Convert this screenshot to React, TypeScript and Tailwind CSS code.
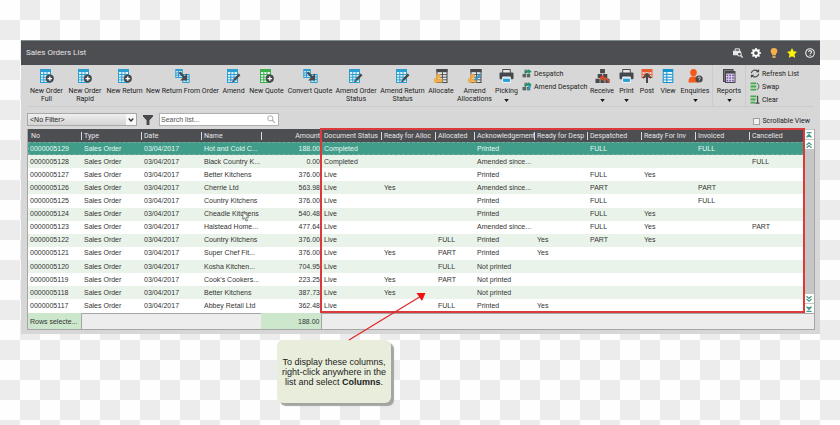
import { ReactNode } from "react";

type Order = {
  no: string;
  name: string;
  amount: string;
  status: string;
  readyAlloc?: string;
  allocated?: string;
  ack: string;
  readyDesp?: string;
  despatched?: string;
  readyInv?: string;
  invoiced?: string;
  cancelled?: string;
};

const orders: Order[] = [
  { no: "0000005129", name: "Hot and Cold C...", amount: "188.00", status: "Completed", ack: "Printed", despatched: "FULL", invoiced: "FULL" },
  { no: "0000005128", name: "Black Country K...", amount: "0.00", status: "Completed", ack: "Amended since...", cancelled: "FULL" },
  { no: "0000005127", name: "Better Kitchens", amount: "376.00", status: "Live", ack: "Printed", despatched: "FULL", readyInv: "Yes" },
  { no: "0000005126", name: "Cherrie Ltd", amount: "563.98", status: "Live", readyAlloc: "Yes", ack: "Amended since...", despatched: "PART", invoiced: "PART" },
  { no: "0000005125", name: "Country Kitchens", amount: "376.00", status: "Live", ack: "Printed", despatched: "FULL", invoiced: "FULL" },
  { no: "0000005124", name: "Cheadle Kitchens", amount: "540.48", status: "Live", ack: "Printed", despatched: "FULL", readyInv: "Yes" },
  { no: "0000005123", name: "Halstead Home...", amount: "477.64", status: "Live", ack: "Amended since...", despatched: "FULL", readyInv: "Yes", cancelled: "PART" },
  { no: "0000005122", name: "Country Kitchens", amount: "376.00", status: "Live", allocated: "FULL", ack: "Printed", readyDesp: "Yes", despatched: "PART", readyInv: "Yes" },
  { no: "0000005121", name: "Super Chef Fit...", amount: "376.00", status: "Live", readyAlloc: "Yes", allocated: "PART", ack: "Printed", readyDesp: "Yes" },
  { no: "0000005120", name: "Kosha Kitchen...", amount: "704.95", status: "Live", allocated: "FULL", ack: "Not printed" },
  { no: "0000005119", name: "Cook's Cookers...", amount: "223.25", status: "Live", readyAlloc: "Yes", allocated: "PART", ack: "Not printed" },
  { no: "0000005118", name: "Better Kitchens", amount: "387.73", status: "Live", readyAlloc: "Yes", ack: "Not printed" },
  { no: "0000005117", name: "Abbey Retail Ltd", amount: "362.48", status: "Live", allocated: "FULL", ack: "Printed", readyDesp: "Yes" },
];

const columns = [
  { title: "No", width: "w-[53px]" },
  { title: "Type", width: "w-[60px]" },
  { title: "Date", width: "w-[60px]" },
  { title: "Name", width: "w-[60px]" },
  { title: "Amount", width: "w-[60px]" },
  { title: "Document Status", width: "w-[60px]" },
  { title: "Ready for Alloc", width: "w-[54px]" },
  { title: "Allocated", width: "w-[39px]" },
  { title: "Acknowledgement", width: "w-[60px]" },
  { title: "Ready for Desp", width: "w-[53px]" },
  { title: "Despatched", width: "w-[54px]" },
  { title: "Ready For Inv", width: "w-[54px]" },
  { title: "Invoiced", width: "w-[54px]" },
  { title: "Cancelled", width: "w-[55px]" },
];

const BLUE = "#2a9fd0";
const GREEN = "#3fae49";
const DARK = "#47484c";

/* icons */
function Sheet({ color }: { color: string }) {
  return (
    <>
      <rect x="0.5" y="0.5" width="10" height="13" fill="#e4f2f8" stroke={color} />
      <rect x="0.5" y="0.5" width="10" height="2.5" fill={color} />
      <path d="M1 5.5h9M1 8.2h9M1 10.9h9M3.8 3v10M7 3v10" stroke={color} strokeWidth="1" />
    </>
  );
}

function Icon({ children, className = "w-[14px] h-[14px]" }: { children: ReactNode; className?: string }) {
  return (
    <svg viewBox="0 0 14 14" className={`shrink-0 ${className}`} fill="none" aria-hidden="true">
      {children}
    </svg>
  );
}

function NewIcon({ color = BLUE }: { color?: string }) {
  return (
    <Icon>
      <Sheet color={color} />
      <circle cx="9.8" cy="9.6" r="4" fill={DARK} />
      <path d="M9.8 7.4v4.4M7.6 9.6h4.4" stroke="#fff" strokeWidth="1.3" />
    </Icon>
  );
}

function ConvertIcon() {
  return (
    <Icon className="w-[15px] h-[14px]">
      <rect x="0.3" y="0.5" width="6.5" height="8" fill="#d6ebf5" stroke={BLUE} />
      <path d="M0.3 1.5h6.5M0.3 4h6.5M0.3 6.2h6.5M3 1v7" stroke={BLUE} />
      <rect x="7.3" y="5.5" width="6.3" height="8" fill="#d6ebf5" stroke={BLUE} />
      <path d="M7.3 8h6.5M7.3 10.6h6.5M10.6 6v7" stroke={BLUE} />
      <path d="M4 3.2l5.5 5.8" stroke={DARK} strokeWidth="2.2" />
      <path d="M11.6 4.600v7h-7z" fill={DARK} />
    </Icon>
  );
}

function AmendIcon() {
  return (
    <Icon>
      <Sheet color={BLUE} />
      <path d="M12.6 5.4L7.2 11" stroke={DARK} strokeWidth="2.4" />
      <path d="M5.2 13.2l.7-2.8 2 2z" fill={DARK} />
    </Icon>
  );
}

function AllocateIcon({ pencil }: { pencil?: boolean }) {
  return (
    <Icon>
      <rect x="3" y="0.5" width="10" height="13" fill="#e8e8e8" stroke={DARK} />
      <rect x="2.5" y="0" width="11" height="3.2" fill={DARK} />
      <path d="M3 5.6h10M3 8.2h10M3 10.8h10M8.5 3v10" stroke={DARK} strokeWidth="0.9" />
      <rect x="2.5" y="5.2" width="3.8" height="3.8" fill="#f3ad45" />
      <rect x="0" y="9.4" width="4" height="4.2" fill="#f3ad45" />
      <rect x="4.5" y="9.4" width="4" height="4.2" fill="#f3ad45" />
      {pencil && <path d="M12.6 5L7 11.4" stroke={BLUE} strokeWidth="2" />}
    </Icon>
  );
}

function PrinterIcon() {
  return (
    <Icon className="w-[15px] h-[14px]">
      <path d="M3.2 0.5h7.6v4H3.2z" fill="#e6e6e6" stroke={DARK} />
      <rect x="0" y="3.6" width="14" height="6.6" rx="1" fill={DARK} />
      <path d="M3.2 8h7.6v5.5H3.2z" fill="#bfe3f3" stroke="#e8f4fa" />
      <path d="M3.600 11.400h6.800" stroke={BLUE} strokeWidth="3" />
    </Icon>
  );
}

function DespatchIcon({ amend }: { amend?: boolean }) {
  return (
    <Icon className="w-[10px] h-[9px]">
      <rect x="3" y="1" width="5" height="5" fill="#69806f" />
      <rect x="0" y="7.6" width="5.4" height="5.4" fill="#5c6660" />
      <rect x="6.6" y="7.6" width="5.4" height="5.4" fill="#5c6660" />
      <path d="M4 7c1-3 3-3.5 6-3.5" stroke="#16906a" strokeWidth="2.4" />
      <path d="M9 0l5 4-5 4z" fill="#16906a" />
      {amend && <path d="M13 5.5L8 12" stroke={BLUE} strokeWidth="2.4" />}
    </Icon>
  );
}

function ReceiveIcon() {
  return (
    <Icon className="w-[15px] h-[14px]">
      <path d="M4.6 0h4.8v4.2H4.6zM2.2 5h4.4v4H2.2zM7.4 5h4.4v4H7.4zM0 9.8h4.2V14H0zM4.9 9.8h4.2V14H4.9zM9.8 9.8H14V14H9.8z" fill={DARK} />
      <path d="M13 13.6c0-3.4-1.6-4.6-6-4.6" stroke="#d8482c" strokeWidth="1.9" />
      <path d="M8.2 5.6v6.8L3.6 9z" fill="#d8482c" />
    </Icon>
  );
}

function PostIcon() {
  return (
    <Icon>
      <rect x="2" y="0.5" width="10" height="8" fill="#f4d9cf" stroke="#ea5b32" />
      <path d="M2 1.5h10" stroke="#ea5b32" strokeWidth="3" />
      <path d="M2 5.5h10M5 3v5M9 3v5" stroke="#ea5b32" />
      <path d="M7 6v8" stroke={DARK} strokeWidth="2" />
      <path d="M3 9.2L7 4.8l4 4.4" stroke={DARK} strokeWidth="1.8" />
    </Icon>
  );
}

function ViewIcon() {
  return (
    <Icon>
      <rect x="2.2" y="0.5" width="9.6" height="13" fill="#eaf6fb" stroke="#1593cf" />
      <path d="M2 1.5h10" stroke="#1593cf" strokeWidth="3" />
      <path d="M2 5.4h10M2 8.2h10M2 10.9h10M5.8 3v10" stroke="#1593cf" />
    </Icon>
  );
}

function EnquiriesIcon() {
  return (
    <Icon className="w-[15px] h-[14px]">
      <ellipse cx="5" cy="3.6" rx="3.3" ry="3.6" fill="#f4591b" />
      <path d="M0 13.6c0-4.6 1.6-6 5-6s5 1.4 5 6z" fill="#f4591b" />
      <circle cx="10.6" cy="10" r="3.6" fill={DARK} />
      <path d="M9.5 9.2c0-1.6 2.3-1.5 2.3 0 0 .9-1.1.9-1.1 1.8M10.7 11.7v.7" stroke="#ddd" strokeWidth="0.9" />
    </Icon>
  );
}

function ReportsIcon() {
  return (
    <Icon>
      <rect x="1.5" y="0.5" width="9.5" height="12" fill="#77777c" stroke={DARK} />
      <rect x="3.5" y="2.5" width="9.5" height="11" fill="#e3dcee" stroke={DARK} />
      <path d="M3.5 3.6h9.5" stroke={DARK} strokeWidth="2" />
      <path d="M4.5 6.4h7.6M4.5 9h7.6M4.5 11.6h7.6" stroke="#7b57ab" strokeWidth="1.6" strokeDasharray="1.8 1" />
    </Icon>
  );
}

function RefreshIcon() {
  return (
    <Icon className="w-[10px] h-[9px]">
      <path d="M1.2 6.4A6 5.6 0 0 1 11.4 3.4M12.8 7.6A6 5.6 0 0 1 2.6 10.6" stroke={DARK} strokeWidth="1.7" />
      <path d="M13.4 0v5.2H8.2zM.6 14V8.8h5.2z" fill={DARK} />
    </Icon>
  );
}

function SwapIcon() {
  return (
    <Icon className="w-[10px] h-[9px]">
      <path d="M0 2h9M0 7h9M0 12h9" stroke={GREEN} strokeWidth="2.8" />
      <path d="M10 2c4 1.5 4 8.500 0 10" stroke={DARK} strokeWidth="1.4" />
    </Icon>
  );
}

function ClearIcon() {
  return (
    <Icon className="w-[10px] h-[9px]">
      <path d="M0 2h9M0 7h8M0 12h7" stroke={GREEN} strokeWidth="2.8" />
      <path d="M11 1v11M7.500 12.800h6.500" stroke={DARK} strokeWidth="2" />
    </Icon>
  );
}

function HeaderIcons() {
  return (
    <div className="flex items-center gap-2">
      <button aria-label="Print preview">
        <Icon className="w-[10px] h-[10px]">
          <path d="M3 4V1.200h6V4" stroke="#e8e8e8" strokeWidth="1.4" />
          <path d="M0 4h11v3H7.500L6 10H0z" fill="#e8e8e8" />
          <circle cx="9" cy="8.600" r="2.600" stroke="#e8e8e8" strokeWidth="1.500" />
          <path d="M11 10.600l2.600 2.800" stroke="#e8e8e8" strokeWidth="1.800" />
        </Icon>
      </button>
      <button aria-label="Settings">
        <Icon className="w-[10px] h-[10px]">
          <circle cx="7" cy="7" r="3.900" stroke="#fff" strokeWidth="2.600" />
          <path d="M7 0v3M7 11v3M0 7h3M11 7h3M2.100 2.100l2 2M9.900 9.900l2 2M2.100 11.900l2-2M9.900 4.100l2-2" stroke="#fff" strokeWidth="2.300" />
        </Icon>
      </button>
      <button aria-label="Tips">
        <Icon className="w-[10px] h-[10px]">
          <path d="M7 0a4.700 4.700 0 0 1 4.700 4.700C11.700 7 9.500 8 9.500 10h-5c0-2-2.200-3-2.200-5.300A4.700 4.700 0 0 1 7 0z" fill="#f9b04c" />
          <path d="M4.800 11h4.400v3H4.800z" fill="#d0a56c" />
        </Icon>
      </button>
      <button aria-label="Favourites">
        <Icon className="w-[10px] h-[10px]">
          <path d="M7 0l2.200 4.600 4.800.6-3.500 3.500.9 5.100L7 11.400l-4.400 2.400.9-5.100L0 5.200l4.800-.6z" fill="#fbf40a" />
        </Icon>
      </button>
      <button aria-label="Help">
        <Icon className="w-[10px] h-[10px]">
          <circle cx="7" cy="7" r="6" stroke="#f0f0f0" strokeWidth="1.500" />
          <path d="M5 5.600c0-2.700 4.200-2.500 4.200 0 0 1.500-2.100 1.500-2.100 3M7.100 9.700v1.500" stroke="#f0f0f0" strokeWidth="1.500" />
        </Icon>
      </button>
    </div>
  );
}

type ToolProps = { icon: ReactNode; lines: string[]; width: string; menu?: boolean };

function Tool({ icon, lines, width, menu }: ToolProps) {
  return (
    <button className={`flex shrink-0 flex-col items-center whitespace-nowrap ${width}`}>
      {icon}
      <span className="mt-[4px] flex flex-col items-center">
        {lines.map((line) => (
          <span key={line}>{line}</span>
        ))}
      </span>
      {menu && (
        <svg viewBox="0 0 6 4" className="mt-1 h-[3px] w-[5px]" aria-hidden="true">
          <path d="M0 0h6L3 4z" fill="#111" />
        </svg>
      )}
    </button>
  );
}

function SmallTool({ icon, label }: { icon: ReactNode; label: string }) {
  return (
    <button className="flex items-center gap-[2px] whitespace-nowrap">
      {icon}
      {label}
    </button>
  );
}

function Toolbar() {
  return (
    <div className="mx-[6px] flex h-[42px] border-b border-[#cbcbcb] font-[Roboto,sans-serif] text-[7px] leading-[8px]">
      <div className="flex items-start pt-1">
        <Tool icon={<NewIcon />} lines={["New Order", "Full"]} width="w-[39px]" />
        <Tool icon={<NewIcon />} lines={["New Order", "Rapid"]} width="w-[38px]" />
        <Tool icon={<NewIcon />} lines={["New Return"]} width="w-[41px]" />
        <Tool icon={<ConvertIcon />} lines={["New Return From Order"]} width="w-[75px]" />
        <Tool icon={<AmendIcon />} lines={["Amend"]} width="w-[27px]" />
        <Tool icon={<NewIcon color={GREEN} />} lines={["New Quote"]} width="w-[39px]" />
        <Tool icon={<ConvertIcon />} lines={["Convert Quote"]} width="w-[48px]" />
        <Tool icon={<AmendIcon />} lines={["Amend Order", "Status"]} width="w-[44px]" />
        <Tool icon={<AmendIcon />} lines={["Amend Return", "Status"]} width="w-[49px]" />
        <Tool icon={<AllocateIcon />} lines={["Allocate"]} width="w-[28px]" />
        <Tool icon={<AllocateIcon pencil />} lines={["Amend", "Allocations"]} width="w-[39px]" />
        <Tool icon={<PrinterIcon />} lines={["Picking"]} width="w-[25px]" menu />
        <div className="flex w-[68px] flex-col gap-1 pl-[3px]">
          <SmallTool icon={<DespatchIcon />} label="Despatch" />
          <SmallTool icon={<DespatchIcon amend />} label="Amend Despatch" />
        </div>
        <Tool icon={<ReceiveIcon />} lines={["Receive"]} width="w-[30px]" menu />
        <Tool icon={<PrinterIcon />} lines={["Print"]} width="w-[19px]" menu />
        <Tool icon={<PostIcon />} lines={["Post"]} width="w-[22px]" />
        <Tool icon={<ViewIcon />} lines={["View"]} width="w-[20px]" />
        <Tool icon={<EnquiriesIcon />} lines={["Enquiries"]} width="w-[34px]" menu />
      </div>
      <div className="border-x border-[#cbcbcb] pt-1">
        <Tool icon={<ReportsIcon />} lines={["Reports"]} width="w-[32px]" menu />
      </div>
      <div className="flex flex-col items-start gap-1 pl-1 pt-1">
        <SmallTool icon={<RefreshIcon />} label="Refresh List" />
        <SmallTool icon={<SwapIcon />} label="Swap" />
        <SmallTool icon={<ClearIcon />} label="Clear" />
      </div>
    </div>
  );
}

function FilterBar() {
  return (
    <div className="mx-[6px] mt-[6px] flex h-[13px] items-center text-[7px]">
      <div className="relative">
        <select
          aria-label="Filter"
          className="block h-[13px] w-[110px] appearance-none border border-[#a8a8a8] bg-linear-to-b from-[#efefef] to-[#d4d4d4] pl-[2px] text-[7px] leading-[11px] text-[#222]"
        >
          <option>&lt;No Filter&gt;</option>
        </select>
        <span className="pointer-events-none absolute top-px right-px bottom-px flex w-[10px] items-center justify-center bg-[#f8f8f8]">
          <svg viewBox="0 0 8 5" className="h-[4px] w-[6px]" fill="none" aria-hidden="true">
            <path d="M1 .5l3 3.200 3-3.200" stroke="#333" strokeWidth="1.800" />
          </svg>
        </span>
      </div>
      <button aria-label="Apply filter" className="ml-[6px]">
        <Icon className="w-[10px] h-[10px]">
          <path d="M0 0h14v2L9 7.500V14H5V7.500L0 2z" fill={DARK} />
        </Icon>
      </button>
      <div className="relative ml-[6px]">
        <input
          type="text"
          aria-label="Search list"
          placeholder="Search list..."
          className="block h-[13px] w-[120px] border border-[#b0b0b0] bg-white pl-px text-[7px] placeholder:text-[#555]"
        />
        <svg viewBox="0 0 14 14" className="absolute top-[2px] right-[4px] h-[8px] w-[8px]" fill="none" aria-hidden="true">
          <circle cx="5.800" cy="5.800" r="4.600" stroke="#a5a5a5" strokeWidth="1.600" />
          <path d="M9 9l4.500 4.500" stroke="#a5a5a5" strokeWidth="2" />
        </svg>
      </div>
      <label className="ml-auto flex items-center gap-[2px] pt-[4px] pr-[4px] font-[Roboto,sans-serif]">
        <input type="checkbox" className="h-[7px] w-[7px] appearance-none border border-[#a0a0a0] bg-[#f2f2f2]" />
        Scrollable View
      </label>
    </div>
  );
}

function ScrollButton({ label, path }: { label: string; path: string }) {
  return (
    <button aria-label={label} className="flex h-[9px] w-[9px] items-center justify-center bg-white">
      <svg viewBox="0 0 6 6" className="h-[6px] w-[6px]" fill="none" aria-hidden="true">
        <path d={path} stroke="#3f9d89" strokeWidth="1.200" />
      </svg>
    </button>
  );
}

function OrdersTable() {
  return (
    <div className="relative mr-[5px] ml-[6px] mt-[3px] flex border border-t-0 border-[#a6a6a6]">
      <table className="h-[200px] w-full table-fixed border-collapse text-left text-[7px] leading-[12px] whitespace-nowrap text-[#333]">
        <colgroup>
          {columns.map((col) => (
            <col key={col.title} className={col.width} />
          ))}
        </colgroup>
        <thead className="bg-[#4d4e52] font-[Roboto,sans-serif] text-[#e6e6e6]">
          <tr className="h-[13px]">
            {columns.map((col, i) => (
              <th key={col.title} className="p-0 font-normal">
                <div
                  className={`h-[8px] leading-[8px] ${i === 0 || i === 5 ? "pl-[3px]" : "border-l border-[#d8d8d8] pl-[2px]"} ${
                    col.title === "Amount" ? "pr-px text-right" : ""
                  }`}
                >
                  {col.title}
                </div>
              </th>
            ))}
          </tr>
        </thead>
        <tbody>
          {orders.map((o, i) => (
            <tr
              key={o.no}
              className={
                i === 0
                  ? "bg-[#3f9d89] text-[#e9f7f2] outline-1 -outline-offset-1 outline-dashed outline-[#78a99c]"
                  : i % 2 === 1
                    ? "bg-[#eaf3ea]"
                    : "bg-white"
              }
            >
              <td className="p-0 pl-[2px]">{o.no}</td>
              <td className="p-0 pl-[3px]">Sales Order</td>
              <td className="p-0 pl-[3px]">03/04/2017</td>
              <td className="p-0 pl-[3px]">{o.name}</td>
              <td className="p-0 pr-px text-right">{o.amount}</td>
              <td className="p-0 pl-[3px]">{o.status}</td>
              <td className="p-0 pl-[3px]">{o.readyAlloc}</td>
              <td className="p-0 pl-[3px]">{o.allocated}</td>
              <td className="p-0 pl-[3px]">{o.ack}</td>
              <td className="p-0 pl-[3px]">{o.readyDesp}</td>
              <td className="p-0 pl-[3px]">{o.despatched}</td>
              <td className="p-0 pl-[3px]">{o.readyInv}</td>
              <td className="p-0 pl-[3px]">{o.invoiced}</td>
              <td className="p-0 pl-[3px]">{o.cancelled}</td>
            </tr>
          ))}
        </tbody>
        <tfoot>
          <tr className="h-[16px] bg-[#ededed]">
            <td className="bg-[#cde7cd] p-0 pt-px pl-[2px]">Rows selecte...</td>
            <td colSpan={3} className="border-t border-l border-[#a6a6a6] p-0"></td>
            <td className="bg-[#cde7cd] p-0 pt-px pr-px text-right">188.00</td>
            <td colSpan={9} className="border-t border-l border-[#a6a6a6] p-0"></td>
          </tr>
        </tfoot>
      </table>
      <div className="flex w-[10px] shrink-0 flex-col items-center bg-[#c6c6c6]">
        <div className="flex flex-col gap-px pt-px">
          <ScrollButton label="First row" path="M.5 .6h5M.5 5.500L3 2.500l2.500 3M2 4.500h2" />
          <ScrollButton label="Page up" path="M.5 3L3 .8 5.500 3M.5 5.800L3 3.600l2.500 2.200" />
        </div>
        <div className="mt-auto flex flex-col gap-px">
          <ScrollButton label="Page down" path="M.5 .2L3 2.400 5.500 .2M.5 3L3 5.200 5.500 3" />
          <ScrollButton label="Last row" path="M.5 5.400h5M.5 .5L3 3.500l2.500-3M2 1.500h2" />
        </div>
        <div className="h-[16px] w-full border-t border-[#a6a6a6] bg-[#ededed]" />
      </div>

      {/* highlighted columns */}
      <div className="pointer-events-none absolute -top-px right-[9px] bottom-[16px] left-[37.2%] border-2 border-[#dc3a3a]" />
      {/* mouse pointer */}
      <svg viewBox="0 0 8 12" className="pointer-events-none absolute top-[82px] left-[214px] h-[11px] w-[8px]" aria-hidden="true">
        <path d="M.6 .8v8.400l2-1.800 1.500 3.600 1.500-.7L4.200 6.900l2.800-.2z" fill="#fff" stroke="#555" strokeWidth="0.800" />
      </svg>
    </div>
  );
}

function Callout() {
  return (
    <div className="relative mt-[6px] ml-[277px] flex h-[63px] w-[114px] items-center justify-center rounded-md bg-[#e9eddb] text-center text-[9px] leading-[10px] text-[#222] shadow-[3px_3px_1px_#a3a5a0]">
      <p className="whitespace-nowrap">
        To display these columns,
        <br />
        right-click anywhere in the
        <br />
        list and select <b>Columns</b>.
      </p>
      <svg viewBox="0 0 80 50" className="pointer-events-none absolute -top-[49px] left-[71px] h-[50px] w-[80px]" fill="none" aria-hidden="true">
        <path d="M1 49L74 4.500" stroke="#e02a2a" strokeWidth="1.300" />
        <path d="M68.500 2h9l-3.500 8z" fill="#ee1111" />
      </svg>
    </div>
  );
}

export default function App() {
  return (
    <main className="min-h-screen overflow-hidden bg-[#fefefe] bg-[repeating-conic-gradient(#ececec_0_25%,#fefefe_0_50%)] bg-size-[40px_40px] font-['Liberation_Sans',Arial,sans-serif] text-[#222]">
      <section className="mt-10 mr-5 ml-[21px] bg-[#d7d7d7] pb-[4px]">
        <header className="flex h-[25px] items-center justify-between border-t border-[#7f8a8a] bg-[#4d4e52] px-[5px]">
          <h1 className="font-[Roboto,sans-serif] text-[8px] leading-[12px] text-[#e6e6e6]">Sales Orders List</h1>
          <HeaderIcons />
        </header>
        <Toolbar />
        <FilterBar />
        <OrdersTable />
      </section>
      <Callout />
    </main>
  );
}
